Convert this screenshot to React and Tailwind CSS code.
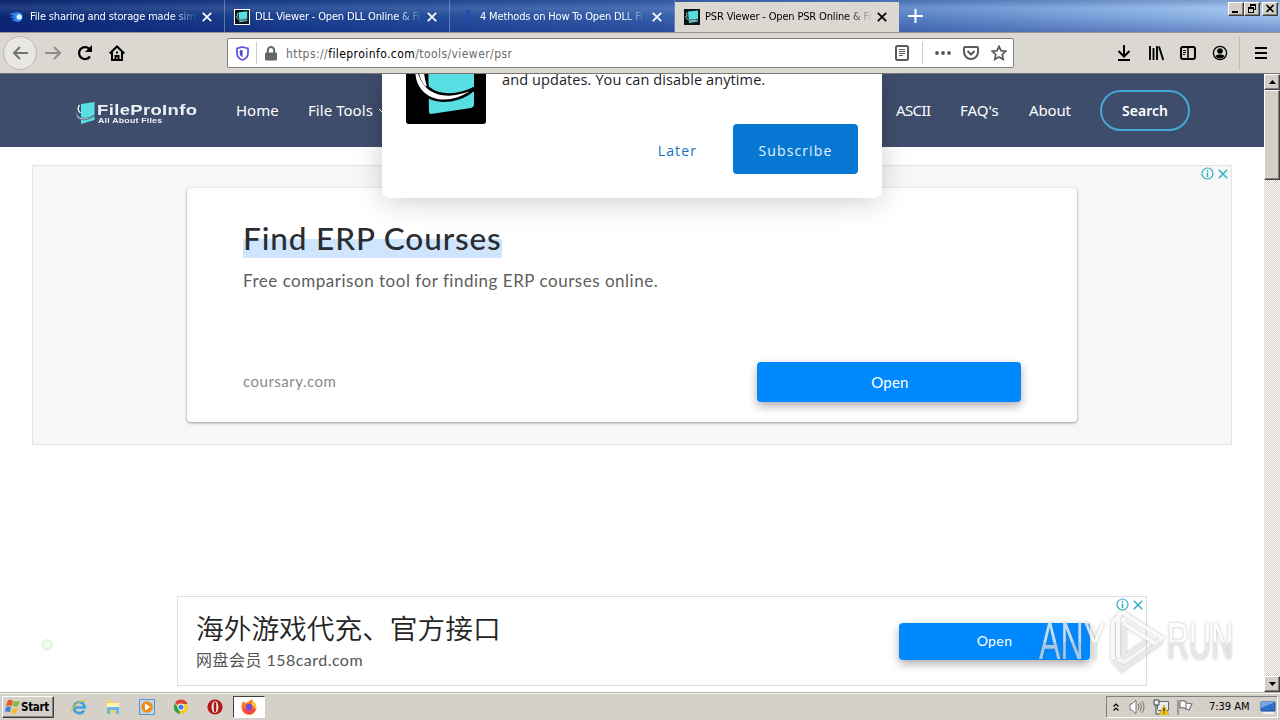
import React from "react";

const bevel =
  "bg-[#d4d0c8] border border-t-white border-l-white border-r-[#404040] border-b-[#404040] shadow-[inset_-1px_-1px_0_#808080]";

function FileLogo({ className }) {
  return (
    <svg className={className} viewBox="0 0 80 80">
      <rect width="80" height="80" fill="#000" />
      <path d="M22 10 L68 4 V61 Q68 63 65 64 L25 70 Q23 70 23 68 Z" fill="#58dfe4" />
      <path d="M8 26 C8 61 48 66 72 42 C48 55 22 54 14 31 Q9 22 8 26Z" fill="#fff" stroke="#000" strokeWidth="2.500" />
      <path d="M17 12 C11 22 13 34 20 42 Q16 30 17 12Z" fill="#fff" stroke="#fff" strokeWidth="1.500" />
    </svg>
  );
}

function TabLogo({ className }) {
  return (
    <svg className={className} viewBox="0 0 16 16">
      <path d="M0 0h16v16H0z" fill="#0b1416" />
      <path d="M4 2.500 14 1.500v11L5 14Z" fill="#58dfe4" />
      <path d="M1.500 7q1 6.500 12 3.500" fill="none" stroke="#0b1416" strokeWidth="1.800" />
      <path d="M1.500 7q1 6 11 4M3 3.500q-1 2 .5 4" fill="none" stroke="#e9f7f7" strokeWidth=".8" />
    </svg>
  );
}

function Close({ className }) {
  return (
    <svg className={className} viewBox="0 0 10 10" fill="none" stroke="currentColor" strokeWidth="1.7">
      <path d="M.8.8 9.2 9.2M9.2.8.8 9.2" />
    </svg>
  );
}

function Tab({ icon, title, active }) {
  return (
    <div
      className={
        active
          ? "mt-[2px] flex h-[30px] w-[224px] items-center bg-[#dad8d1] pr-[11px] pl-[9px] text-black"
          : "flex h-8 w-[225px] items-center border-r border-[#7d93c4]/70 pt-[2px] pr-[11px] pl-[9px] text-white"
      }
    >
      <div className="mr-[5px] h-4 w-4 shrink-0">{icon}</div>
      <div className="h-5 w-[168px] shrink-0 whitespace-nowrap text-[11px] leading-5 tracking-[-.16px] [mask-image:linear-gradient(to_right,#000_84%,transparent)]">
        {title}
      </div>
      <Close className="ml-[4px] h-[10px] w-[10px] shrink-0" />
    </div>
  );
}

function TitleBar() {
  return (
    <div className="flex h-8 shrink-0 bg-[linear-gradient(to_bottom,rgba(0,20,90,.18),rgba(255,255,255,.1)_25%,rgba(0,20,100,.02)_50%,rgba(10,20,120,.3)),linear-gradient(to_right,#0b2874,#1e4592_25%,#3660aa_50%,#5c86c8_72%,#a0c6f0)]">
      <Tab
        title="File sharing and storage made simp"
        icon={
          <svg viewBox="0 0 16 16">
            <path d="M0 5 9 3a5 5 0 1 1-1 10L2 11l4-1-5-2 4-1Z" fill="#2f83ee" />
            <circle cx="10.3" cy="8" r="2.8" fill="#d9f1ff" />
          </svg>
        }
      />
      <Tab title="DLL Viewer - Open DLL Online & Fr" icon={<TabLogo className="h-4 w-4 border border-white" />} />
      <Tab
        title="4 Methods on How To Open DLL Fi"
        icon={
          <svg viewBox="0 0 16 16" fill="#1c4bb0">
            <circle cx="9" cy="3" r="2.2" />
            <path d="M5 6h5v8h2v1H6v-1h2V8H5z" />
          </svg>
        }
      />
      <Tab active title="PSR Viewer - Open PSR Online & Fr" icon={<TabLogo className="h-4 w-4" />} />
      <svg className="mt-[9px] ml-[9px] h-[14px] w-[15px]" viewBox="0 0 15 14" stroke="#fff" strokeWidth="2">
        <path d="M0 7h15M7.5 0v14" />
      </svg>
      <div className="mt-[2px] ml-auto flex h-[14px] pr-[2px]">
        <div className={"h-[14px] w-4 " + bevel}>
          <svg viewBox="0 0 14 12" className="h-3 w-[14px]"><path d="M3 8h6v2H3z" /></svg>
        </div>
        <div className={"h-[14px] w-4 " + bevel}>
          <svg viewBox="0 0 14 12" className="h-3 w-[14px]" fill="none" stroke="#000" shapeRendering="crispEdges">
            <path d="M5.500 4V1.500h5v5H8M5 2h6" /><path d="M3.500 4.500h5v5h-5zM3 5h6" />
          </svg>
        </div>
        <div className={"ml-[2px] h-[14px] w-4 " + bevel}>
          <svg viewBox="0 0 14 12" className="h-3 w-[14px]" stroke="#000" strokeWidth="1.7"><path d="m3.500 2 7 7m0-7-7 7" /></svg>
        </div>
      </div>
    </div>
  );
}

function ToolBar() {
  return (
    <div className="flex h-[42px] shrink-0 items-center border-t border-b border-t-[#97958f] border-b-[#77756f] bg-[#dad8d1] text-black">
      <div className="ml-[3px] flex h-[34px] w-[34px] items-center justify-center rounded-full border border-[#bab7b0] bg-[#e9e7e2]">
        <svg className="h-4 w-[17px]" viewBox="0 0 17 16" fill="none" stroke="#76746f" strokeWidth="2"><path d="M16 8H2M8 2 2 8l6 6" /></svg>
      </div>
      <svg className="ml-[8px] h-4 w-4" viewBox="0 0 16 16" fill="none" stroke="#8f8d88" strokeWidth="2"><path d="M0 8h15M9 2l6 6-6 6" /></svg>
      <svg className="ml-[16px] h-4 w-4" viewBox="0 0 16 16" fill="none" stroke="#000" strokeWidth="2.2"><path d="M13 11.500A6 6 0 1 1 12 3.500L14 6" /><path d="M15 0v7H8z" fill="#000" stroke="none" /></svg>
      <svg className="ml-[16px] h-4 w-4" viewBox="0 0 16 16" fill="none" stroke="#000" strokeWidth="2"><path d="M.7 8.500 8 1.500l7.300 7M3 7v8h10V7" /><path d="M6.500 15v-4h3v4M7 7.500h2" /></svg>

      <div className="ml-[102px] flex h-[30px] w-[787px] items-center rounded-[2px] border border-[#83817b] bg-white">
        <svg className="ml-[8px] h-[15px] w-[13px]" viewBox="0 0 13 15"><path d="M6.500 1 12 2.500V7c0 4-2.500 6-5.500 7C3.500 13 1 11 1 7V2.500Z" fill="#fff" stroke="#6058dc" strokeWidth="1.8" /><path d="M6.500 3.800V11C4.500 10 3.700 9 3.700 7V4.500Z" fill="#5046c8" /></svg>
        <div className="ml-[7px] h-[22px] w-px bg-[#cfcdca]" />
        <svg className="ml-[8px] h-[15px] w-[12px]" viewBox="0 0 12 15"><path d="M2.800 7V4.300a3.200 3.200 0 0 1 6.400 0V7" fill="none" stroke="#666" strokeWidth="2" /><rect y="6.500" width="12" height="8" rx="1" fill="#666" /></svg>
        <div className="mt-px ml-[9px] text-[12px] tracking-[.43px] text-[#6a6a6a]">
          https://<span className="text-black">fileproinfo.com</span>/tools/viewer/psr
        </div>
        <svg className="ml-auto h-4 w-[14px]" viewBox="0 0 14 16" fill="none" stroke="#5a5a5a"><rect x="1" y="1" width="12" height="14" rx="1.500" strokeWidth="2" /><path d="M4 4.500h6M4 6.500h6M4 8.500h6M4 10.500h4" /></svg>
        <div className="ml-[13px] h-[22px] w-px bg-[#cfcdca]" />
        <svg className="ml-[12px] h-4 w-4" viewBox="0 0 16 16" fill="#555"><circle cx="2" cy="8" r="1.900" /><circle cx="8" cy="8" r="1.900" /><circle cx="14" cy="8" r="1.900" /></svg>
        <svg className="ml-[12px] h-4 w-4" viewBox="0 0 16 16" fill="none" stroke="#5a5a5a" strokeWidth="2"><path d="M1 3q0-1 1-1h12q1 0 1 1v4a7 7 0 0 1-14 0Z" /><path d="m4.500 6 3.500 3.500L11.500 6" /></svg>
        <svg className="mr-[6px] ml-[12px] h-4 w-4" viewBox="0 0 16 16" fill="none" stroke="#5a5a5a" strokeWidth="1.700"><path d="m8 1.300 2 4.300 4.800.6-3.500 3.300.9 4.800L8 12l-4.200 2.300.9-4.800L1.200 6.200 6 5.600Z" /></svg>
      </div>

      <svg className="ml-[102px] h-4 w-4" viewBox="0 0 16 16" fill="none" stroke="#000" strokeWidth="2"><path d="M8 0v11M2.500 6 8 11.500 13.500 6M2 15h12" /></svg>
      <svg className="ml-[16px] h-4 w-4" viewBox="0 0 16 16" stroke="#000" strokeWidth="1.900"><path d="M2 1v14M5.500 3v12M9 1v14M11 1.500 15.200 15" /></svg>
      <svg className="ml-[16px] h-4 w-4" viewBox="0 0 16 16" fill="none" stroke="#000"><rect x="1" y="2" width="14" height="12" rx="2" strokeWidth="2" /><path d="M8 2v12" strokeWidth="1.500" /><path d="M3 5.500h3M3 7.500h3M3 9.500h2" /></svg>
      <svg className="ml-[16px] h-4 w-4" viewBox="0 0 16 16"><circle cx="8" cy="8" r="6.600" fill="none" stroke="#000" strokeWidth="1.300" /><circle cx="8" cy="6" r="2.800" /><path d="M3.500 11q1-1.500 3-1.500h3q2 0 3 1.500-1.500 2.500-4.500 2.500T3.500 11Z" /></svg>
      <div className="ml-[11px] h-[34px] w-px bg-[#c0bdb6]" />
      <svg className="ml-[15px] h-3 w-3" viewBox="0 0 12 12" stroke="#000" strokeWidth="2"><path d="M0 1h12M0 6h12M0 11h12" /></svg>
    </div>
  );
}

function AdMarks() {
  return (
    <div className="flex h-[13px] items-center gap-[4px]">
      <svg className="h-[13px] w-[13px]" viewBox="0 0 13 13" fill="none" stroke="#29b1c8"><circle cx="6.500" cy="6.500" r="5.500" strokeWidth="1.200" /><path d="M6.500 3v1.500M6.500 5.500V10" strokeWidth="1.500" /></svg>
      <svg className="h-[10px] w-[10px]" viewBox="0 0 10 10" stroke="#29b1c8" strokeWidth="1.500"><path d="m.8.8 8.400 8.400m0-8.400L.8 9.200" /></svg>
    </div>
  );
}

function Nav() {
  return (
    <div className="flex h-[73px] items-center bg-[#3e4d6b] pl-[76px] font-['Noto_Sans',sans-serif] text-[15px] text-white">
      <svg className="mt-[4px] h-[22px] w-[20px]" viewBox="0 0 20 22"><path d="M5 2 18.500 0v18L5 22Z" fill="#58dfe4" /><path d="M1 8C0 18 9 18 19 13 12 20-3 20 1 8Z" fill="#fff" stroke="#3e4d6b" strokeWidth=".8" /><path d="M3.500 3C1.500 6 2 9 4.500 11" fill="none" stroke="#fff" strokeWidth="1.300" /></svg>
      <div className="mt-[6px] ml-px flex w-[103px] flex-col font-['Liberation_Sans',sans-serif] font-bold whitespace-nowrap text-[#eef1f6]">
        <span className="w-[86px] origin-left scale-x-[1.23] text-[15px] leading-[14px] tracking-[.3px]">FileProInfo</span>
        <span className="ml-px w-[52px] origin-left scale-x-[1.18] text-[7.5px] leading-[8px] tracking-[.15px]">All About Files</span>
      </div>
      <span className="ml-[36px] w-[72px]">Home</span>
      <span className="w-[70px] whitespace-nowrap tracking-[.05px]">File Tools</span>
      <svg className="h-2 w-2" viewBox="0 0 8 8" fill="none" stroke="#fff"><path d="m1 2 3 3 3-3" /></svg>
      <span className="ml-[510px] w-[64px] tracking-[-.6px]">ASCII</span>
      <span className="w-[69px]">FAQ's</span>
      <span className="w-[71px] tracking-[-.15px]">About</span>
      <span className="flex h-[41px] w-[90px] items-center justify-center rounded-full border-2 border-[#46a8d6] text-[14px] font-semibold">Search</span>
    </div>
  );
}

function Prompt() {
  return (
    <div className="absolute top-0 left-[382px] flex h-[124px] w-[500px] rounded-b-[8px] bg-white px-6 shadow-[0_4px_28px_rgba(0,0,0,.19)]">
      <div className="flex h-[50px] w-20 shrink-0 items-end overflow-hidden rounded-b-[3px]">
        <FileLogo className="h-20 w-20 shrink-0" />
      </div>
      <div className="ml-4 flex flex-1 flex-col">
        <div className="h-[50px] font-['Open_Sans',sans-serif] text-[14.5px] leading-[12px] tracking-[.1px] whitespace-nowrap text-[#1c1c28]">
          and updates. You can disable anytime.
        </div>
        <div className="flex h-[50px] items-center justify-end font-['Open_Sans',sans-serif] text-[14px] tracking-[1.1px]">
          <span className="mt-[2px] mr-[36px] text-[#0f72bd]">Later</span>
          <span className="flex h-[50px] w-[125px] items-center justify-center rounded-[4px] bg-[#0678d4] pt-[2px] text-[#e5f3ff]">Subscribe</span>
        </div>
      </div>
    </div>
  );
}

function Watermark() {
  return (
    <div className="absolute top-[536px] left-[1039px] flex h-[64px] items-center opacity-75 [filter:drop-shadow(0_0_1.5px_rgba(110,110,110,.6))]">
      <div className="w-[70px]">
        <span className="block w-[120px] origin-left scale-x-[.63] bg-[linear-gradient(#fdfdfd_50%,#dedede_50%)] bg-clip-text font-['Liberation_Sans',sans-serif] text-[51px] leading-[64px] whitespace-nowrap text-transparent">ANY</span>
      </div>
      <svg className="h-[64px] w-[56px]" viewBox="0 0 56 64" fill="none" strokeWidth="4">
        <path d="M4 50V12l5-5v40M10 8V4l4-1 39 25-6 6L14 13" stroke="#f8f8f8" />
        <path d="M4 50l8 9v-6M15 17v30l22-15M52 32 12 60" stroke="#e2e2e2" />
      </svg>
      <div className="ml-[2px] w-[66px]">
        <span className="block w-[120px] origin-left scale-x-[.6] bg-[linear-gradient(#fdfdfd_50%,#dedede_50%)] bg-clip-text font-['Liberation_Sans',sans-serif] text-[51px] leading-[64px] whitespace-nowrap text-transparent">RUN</span>
      </div>
    </div>
  );
}

function Page() {
  return (
    <div className="relative h-[618px] w-[1264px] overflow-hidden bg-white">
      <Nav />
      <div className="mt-[18px] ml-8 h-[280px] w-[1200px] border border-[#e4e4e4] bg-[#f7f7f7]">
        <div className="flex h-[22px] justify-end pt-px pr-[3px]"><AdMarks /></div>
        <div className="ml-[154px] flex h-[234px] w-[890px] flex-col rounded-[4px] bg-white px-14 font-['Lato',sans-serif] shadow-[0_1px_3px_rgba(0,0,0,.4)]">
          <div className="mt-[30px] flex">
            <span className="h-10 w-[259px] bg-[linear-gradient(to_bottom,transparent_21px,#cee5fd_21px)] text-[31.5px] leading-[40px] font-medium tracking-[.88px] whitespace-nowrap text-[#292c31]">Find ERP Courses</span>
          </div>
          <div className="mt-[11px] h-6 text-[17px] leading-6 tracking-[.52px] whitespace-nowrap text-[#5d5d5d]">Free comparison tool for finding ERP courses online.</div>
          <div className="mt-[69px] flex items-center justify-between">
            <span className="mb-[2px] text-[15px] tracking-[.5px] text-[#8a8a8a]">coursary.com</span>
            <span className="flex h-10 w-[264px] items-center justify-center rounded-[4px] bg-[#0088ff] pl-[2px] text-[15px] tracking-[.2px] text-white shadow-[0_4px_10px_rgba(0,0,0,.32)]">Open</span>
          </div>
        </div>
      </div>
      <div className="mt-[151px] ml-[177px] flex h-[90px] w-[970px] justify-between border border-[#dedede] bg-white">
        <div className="ml-[18px] flex flex-col pt-[12px] font-['Lato','Noto_Sans_CJK_SC',sans-serif]">
          <span className="h-[38px] font-['Noto_Sans_CJK_SC',sans-serif] text-[27.7px] leading-[37px] font-[350] whitespace-nowrap text-[#252525]">海外游戏代充、官方接口</span>
          <span className="h-6 text-[16px] leading-[26px] tracking-[.47px] whitespace-nowrap text-[#555]">网盘会员 158card.com</span>
        </div>
        <div className="flex">
          <span className="mt-[26px] flex h-[37px] w-[191px] items-center justify-center rounded-[4px] bg-[#0088ff] pb-[2px] font-['Lato',sans-serif] text-[14px] tracking-[.4px] text-white shadow-[0_4px_10px_rgba(0,0,0,.32)]">Open</span>
          <div className="mt-px mr-[3px] ml-[26px]"><AdMarks /></div>
        </div>
      </div>
      <Prompt />
      <div className="absolute top-[565px] left-[41px] h-3 w-3 rounded-full border-[3px] border-[#dff8dc] bg-[#f2fff0]" />
      <Watermark />
    </div>
  );
}

function ScrollBar() {
  return (
    <div className="flex h-[618px] w-4 flex-col bg-[#e9e7e3] bg-[repeating-conic-gradient(#d4d0c8_0_25%,#fff_0_50%)] bg-[length:2px_2px]">
      <div className={"flex h-4 w-4 items-center justify-center " + bevel}><svg className="h-1 w-[7px]" viewBox="0 0 7 4"><path d="M0 4h7L3.500 0Z" /></svg></div>
      <div className={"h-[90px] w-4 " + bevel} />
      <div className={"mt-auto flex h-4 w-4 items-center justify-center " + bevel}><svg className="h-1 w-[7px]" viewBox="0 0 7 4"><path d="M0 0h7L3.500 4Z" /></svg></div>
    </div>
  );
}

function TaskBar() {
  return (
    <div className="flex h-7 shrink-0 items-center border-t border-[#b9b6ae] bg-[#d5d0c8] pt-[3px] pb-[2px] pl-[2px] shadow-[inset_0_1px_0_#f4f2ee]">
      <div className={"flex h-[22px] w-[52px] items-center pl-[2px] " + bevel}>
        <svg className="h-4 w-4" viewBox="0 0 16 16"><path d="M3 1q3-1 5 1L7 7Q4 6 1 7Z" fill="#e85a28" /><path d="M9 2q3 1 6 0l-2 5q-2 1-5 0Z" fill="#7dbb3c" /><path d="M1 8q3-1 5 0l-1 5q-3-1-5 0Z" fill="#3d83d6" /><path d="M7 9q3 1 6 0l-2 5q-3 1-5 0Z" fill="#f3c42f" /></svg>
        <span className="pt-px text-[11.5px] font-bold tracking-[-.3px]">Start</span>
      </div>
      <svg className="ml-[17px] h-4 w-4" viewBox="0 0 16 16" fill="none"><path d="M13 11.500A5.500 5.500 0 1 1 13.800 8.500H4" stroke="#3da1df" strokeWidth="2.700" /><path d="M1 14C-1 9 11-1 15 2" stroke="#e9bd42" strokeWidth="1.300" /></svg>
      <svg className="ml-[18px] h-4 w-4" viewBox="0 0 16 16"><path d="M1 1h6l1 2h6v11H1Z" fill="#ecd27a" /><path d="M2 4h12v4H2Z" fill="#fff3bd" /><path d="M2 15V8h12v7h-3v-4H5v4Z" fill="#6ab8e6" /></svg>
      <svg className="ml-[18px] h-4 w-4" viewBox="0 0 16 16"><path d="M.5.5h15v15H.5z" fill="#bdd7ef" stroke="#5b93cb" /><circle cx="8" cy="8" r="5.800" fill="#f28a16" /><path d="M6 4.500v7L11.500 8Z" fill="#fff" /></svg>
      <svg className="ml-[18px] h-4 w-4" viewBox="0 0 16 16"><circle cx="8" cy="8" r="7" fill="#f8c82c" /><path d="M8 8 2 4a7 7 0 0 1 12.500 1H8Z" fill="#df4034" /><path d="M1.800 4.500 6 10l1 5A7 7 0 0 1 1.800 4.500Z" fill="#31a350" /><circle cx="8" cy="8" r="3.400" fill="#fff" /><circle cx="8" cy="8" r="2.600" fill="#427fe0" /></svg>
      <svg className="ml-[18px] h-4 w-4" viewBox="0 0 16 16"><circle cx="8" cy="8" r="7.600" fill="#b31718" /><ellipse cx="8" cy="8" rx="3.400" ry="6" fill="#f5e5e3" /><ellipse cx="8" cy="8" rx="1.300" ry="5.500" fill="#aa1517" /></svg>
      <div className="ml-[10px] flex h-[22px] w-8 items-center justify-center border border-t-[#404040] border-r-white border-b-white border-l-[#404040] bg-white">
        <svg className="h-4 w-4" viewBox="0 0 16 16"><path d="M2 2 4 4l3-1 4-3q0 2 3 4 2 4 1 7-2 5-7 5Q1 15 .5 9 0 6 2 2Z" fill="#ff7b26" /><path d="M1 7q2 4 8 4l6-2q-2 6-7 6T1 7Z" fill="#f63e55" /><path d="M11 0q0 2 3 4 2 4 1 7-1-4-4-5Z" fill="#ffca35" /><circle cx="8" cy="8" r="3.300" fill="#744bd0" /></svg>
      </div>
      <div className="mr-[2px] ml-auto flex h-[22px] w-[172px] items-center border border-t-[#808080] border-r-white border-b-white border-l-[#808080] pl-[6px]">
        <svg className="h-2 w-[6px]" viewBox="0 0 6 8" fill="none" stroke="#000" strokeWidth="1.200"><path d="m.5 3.500 2.500-2.500 2.500 2.500M.5 7.500 3 5l2.500 2.500" /></svg>
        <svg className="ml-[10px] h-4 w-4" viewBox="0 0 16 16" stroke="#777" fill="#fff"><path d="M1 5h2l4-4v14l-4-4H1Z" /><path d="M9 5q2 3 0 6M11 3.500q3 4.500 0 9M13 2q4 6 0 12" fill="none" /></svg>
        <svg className="ml-[8px] h-4 w-4" viewBox="0 0 16 16"><path d="M4.500 2.500h11v9h-11z" fill="#e9edf2" stroke="#666" /><path d="M1 1h5v5H1zM3 6v9h3" fill="#eee" stroke="#444" /><path d="m11 6 5 10H6Z" fill="#f8cd17" stroke="#aa8611" strokeWidth=".6" /><path d="M11 9v3.500M11 13.500v1" stroke="#222" strokeWidth="1.300" /></svg>
        <svg className="ml-[8px] h-4 w-4" viewBox="0 0 16 16"><path d="M1 1v15M3 2q3-1 6 1v7q-3-2-6-1ZM9 4l6 1-3 6-3-1" fill="#fff" stroke="#777" strokeWidth="1.200" /></svg>
        <span className="ml-[16px] w-[42px] pt-px text-[11px] tracking-[-.02px] whitespace-nowrap">7:39 AM</span>
        <svg className="ml-[9px] h-4 w-4" viewBox="0 0 16 16"><path d="M1 3h14v9H1z" fill="#2e71cc" stroke="#2453a1" /><path d="M1 3h14L1 9Z" fill="#75a8e8" /><path d="M3 14h11" stroke="#eee" strokeWidth="2" /></svg>
      </div>
    </div>
  );
}

export default function App() {
  return (
    <div className="flex h-[720px] w-[1280px] flex-col overflow-hidden bg-white font-['DejaVu_Sans_Condensed','DejaVu_Sans',sans-serif]">
      <TitleBar />
      <ToolBar />
      <div className="flex h-[618px] shrink-0"><Page /><ScrollBar /></div>
      <TaskBar />
    </div>
  );
}
